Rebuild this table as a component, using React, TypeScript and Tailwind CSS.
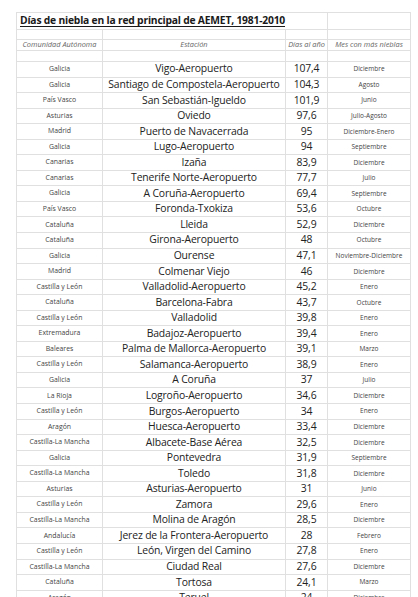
import React from "react";

const rows: [string, string, string, string][] = [
  ["Galicia", "Vigo-Aeropuerto", "107,4", "Diciembre"],
  ["Galicia", "Santiago de Compostela-Aeropuerto", "104,3", "Agosto"],
  ["País Vasco", "San Sebastián-Igueldo", "101,9", "Junio"],
  ["Asturias", "Oviedo", "97,6", "Julio-Agosto"],
  ["Madrid", "Puerto de Navacerrada", "95", "Diciembre-Enero"],
  ["Galicia", "Lugo-Aeropuerto", "94", "Septiembre"],
  ["Canarias", "Izaña", "83,9", "Diciembre"],
  ["Canarias", "Tenerife Norte-Aeropuerto", "77,7", "Julio"],
  ["Galicia", "A Coruña-Aeropuerto", "69,4", "Septiembre"],
  ["País Vasco", "Foronda-Txokiza", "53,6", "Octubre"],
  ["Cataluña", "Lleida", "52,9", "Diciembre"],
  ["Cataluña", "Girona-Aeropuerto", "48", "Octubre"],
  ["Galicia", "Ourense", "47,1", "Noviembre-Diciembre"],
  ["Madrid", "Colmenar Viejo", "46", "Diciembre"],
  ["Castilla y León", "Valladolid-Aeropuerto", "45,2", "Enero"],
  ["Cataluña", "Barcelona-Fabra", "43,7", "Octubre"],
  ["Castilla y León", "Valladolid", "39,8", "Enero"],
  ["Extremadura", "Badajoz-Aeropuerto", "39,4", "Enero"],
  ["Baleares", "Palma de Mallorca-Aeropuerto", "39,1", "Marzo"],
  ["Castilla y León", "Salamanca-Aeropuerto", "38,9", "Enero"],
  ["Galicia", "A Coruña", "37", "Julio"],
  ["La Rioja", "Logroño-Aeropuerto", "34,6", "Diciembre"],
  ["Castilla y León", "Burgos-Aeropuerto", "34", "Enero"],
  ["Aragón", "Huesca-Aeropuerto", "33,4", "Diciembre"],
  ["Castilla-La Mancha", "Albacete-Base Aérea", "32,5", "Diciembre"],
  ["Galicia", "Pontevedra", "31,9", "Septiembre"],
  ["Castilla-La Mancha", "Toledo", "31,8", "Diciembre"],
  ["Asturias", "Asturias-Aeropuerto", "31", "Junio"],
  ["Castilla y León", "Zamora", "29,6", "Enero"],
  ["Castilla-La Mancha", "Molina de Aragón", "28,5", "Diciembre"],
  ["Andalucía", "Jerez de la Frontera-Aeropuerto", "28", "Febrero"],
  ["Castilla y León", "León, Virgen del Camino", "27,8", "Enero"],
  ["Castilla-La Mancha", "Ciudad Real", "27,6", "Diciembre"],
  ["Cataluña", "Tortosa", "24,1", "Marzo"],
  ["Aragón", "Teruel", "24", "Diciembre"],
];

const cols = "grid grid-cols-[86px_183px_42px_83px]";
const cell = "flex items-center justify-center border-r border-b border-[#e0e0e0] overflow-hidden whitespace-nowrap";

const App = () => {
  return (
    <div className="h-[597px] overflow-hidden bg-white pt-[12px] pl-[16px] font-['Open_Sans',sans-serif]">
      <div className="w-[395px] border-l border-t border-[#e0e0e0]">
        {/* title */}
        <div className={`${cols} h-[17px]`}>
          <div className={`${cell} col-span-3 justify-start pl-[3px]`}>
            <span className="text-[10.3px] font-bold tracking-[-0.2px] text-[#1a1a1a] underline underline-offset-[1.5px]">
              Días de niebla en la red principal de AEMET, 1981-2010
            </span>
          </div>
          <div className={cell} />
        </div>
        <div className={`${cols} h-[10px]`}>
          <div className={cell} />
          <div className={cell} />
          <div className={cell} />
          <div className={cell} />
        </div>
        {/* headers */}
        <div className={`${cols} h-[11px] text-[7.4px] italic text-[#666]`}>
          <div className={cell}>Comunidad Autónoma</div>
          <div className={cell}>Estación</div>
          <div className={cell}>Días al año</div>
          <div className={cell}>Mes con más nieblas</div>
        </div>
        <div className={`${cols} h-[11px]`}>
          <div className={cell} />
          <div className={cell} />
          <div className={cell} />
          <div className={cell} />
        </div>
        {rows.map((r, i) => (
          <div key={i} className={`${cols} h-[15.55px]`}>
            <div className={`${cell} text-[6.9px] text-[#444]`}>{r[0]}</div>
            <div className={`${cell} text-[10.4px] tracking-[-0.15px] text-[#222]`}>{r[1]}</div>
            <div className={`${cell} text-[10.4px] tracking-[-0.15px] text-[#222]`}>{r[2]}</div>
            <div className={`${cell} text-[6.5px] text-[#444]`}>{r[3]}</div>
          </div>
        ))}
      </div>
    </div>
  );
};

export default App;
